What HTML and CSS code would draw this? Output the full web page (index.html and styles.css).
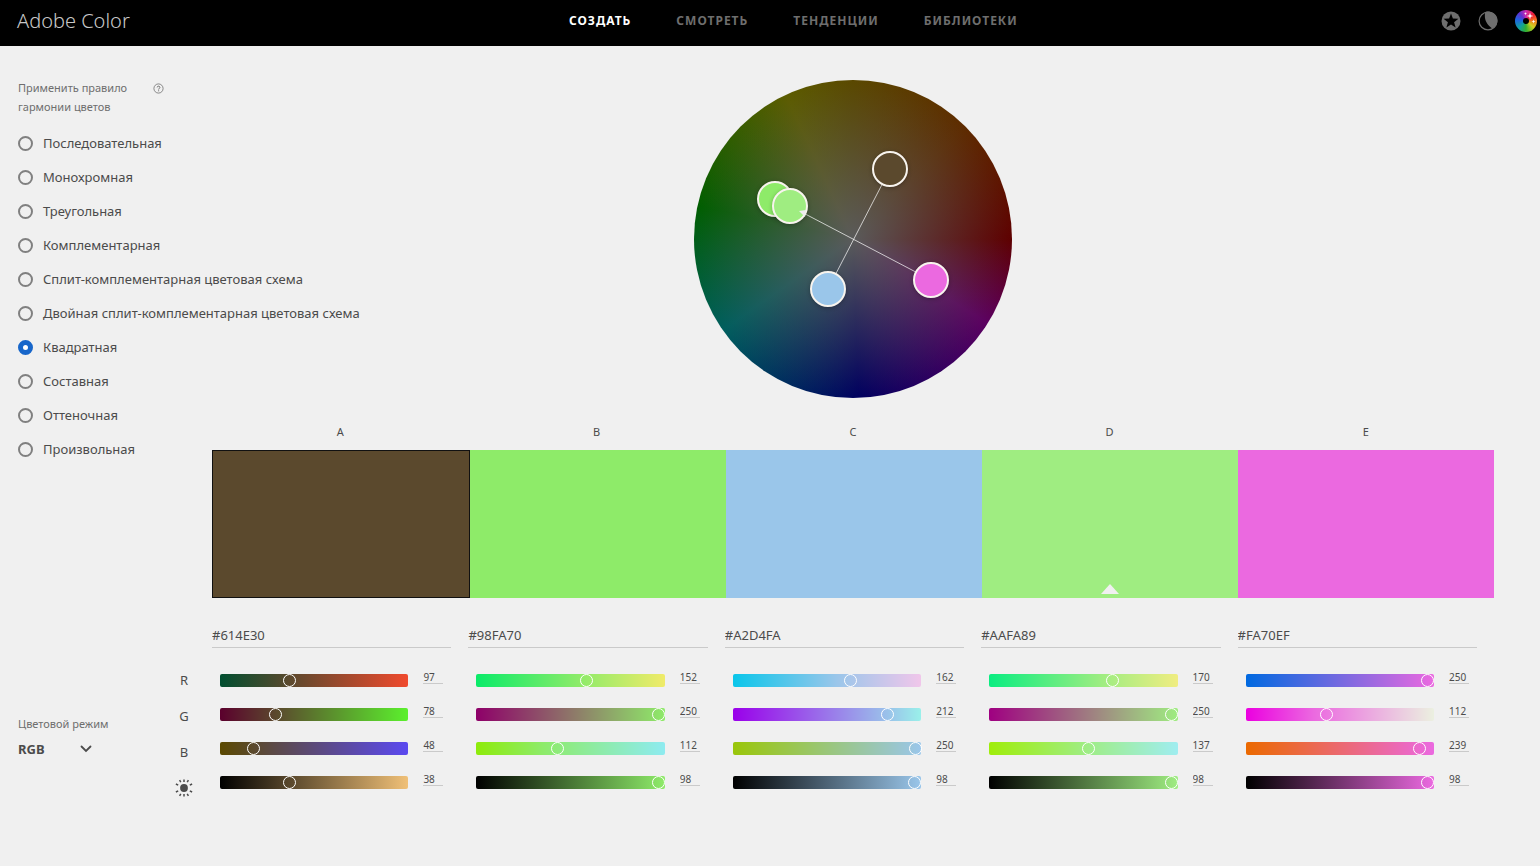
FILE: index.html
```html
<!DOCTYPE html>
<html lang="ru">
<head>
<meta charset="utf-8">
<meta name="viewport" content="width=device-width, initial-scale=1">
<title>Adobe Color</title>
<link rel="stylesheet" href="styles.css">
</head>
<body>
<header class="topbar">
  <a class="brand" href="#">Adobe Color</a>
  <nav class="nav">
    <a class="nav-link current" href="#">СОЗДАТЬ</a>
    <a class="nav-link" href="#">СМОТРЕТЬ</a>
    <a class="nav-link" href="#">ТЕНДЕНЦИИ</a>
    <a class="nav-link" href="#">БИБЛИОТЕКИ</a>
  </nav>
  <div class="tools">
    <button class="tool" aria-label="Избранное"><svg width="20" height="20" viewBox="0 0 20 20"><circle cx="10" cy="10" r="9.5" fill="#6e6e6e"/><path d="M10 2.400l1.900 5.200 5.500.2-4.300 3.400 1.500 5.300L10 13.400l-4.600 3.100 1.500-5.300-4.300-3.400 5.500-.2z" fill="#000"/></svg></button>
    <button class="tool" aria-label="Тема"><svg width="20" height="20" viewBox="0 0 20 20"><circle cx="10" cy="10" r="8.900" fill="none" stroke="#6e6e6e" stroke-width="1.200"/><path d="M7.300 1C5.900 6.500 7.500 13 14.600 17.700 22 13.500 20.800 3 13 1 11 .4 9 .4 7.300 1z" fill="#6e6e6e"/></svg></button>
    <button class="tool" aria-label="Профиль"><span class="avatar"><svg width="22" height="22" viewBox="0 0 22 22"><circle cx="11" cy="11" r="3" fill="#000"/><path d="M15 2.500l.8 2.700 2.700.8-2.700.8-.8 2.700-.8-2.700-2.700-.8 2.700-.8zM18.500 9.500l.5 1.500 1.500.5-1.500.5-.5 1.500-.5-1.500-1.500-.5 1.500-.5zM10.500 2l.4 1.200 1.200.4-1.200.4-.4 1.200-.4-1.200-1.200-.4 1.200-.4z" fill="#fff"/></svg></span></button>
  </div>
</header>

<main class="workspace">
  <section class="rules">
    <div class="rules-head">
      <h2 class="caption" id="rules-title">Применить правило гармонии цветов</h2>
      <button class="help" aria-label="Справка"><svg width="11" height="11" viewBox="0 0 11 11" fill="none" stroke="#6e6e6e"><circle cx="5.500" cy="5.500" r="4.600" stroke-width=".8"/><path d="M4.200 4.400c0-1.700 2.700-1.600 2.700 0 0 1-1.300 1-1.300 2.100M5.600 7.300v1"/></svg></button>
    </div>
    <div class="rule-list" role="radiogroup" aria-labelledby="rules-title">
      <label class="rule"><input type="radio" name="rule">Последовательная</label>
      <label class="rule"><input type="radio" name="rule">Монохромная</label>
      <label class="rule"><input type="radio" name="rule">Треугольная</label>
      <label class="rule"><input type="radio" name="rule">Комплементарная</label>
      <label class="rule"><input type="radio" name="rule">Сплит-комплементарная цветовая схема</label>
      <label class="rule"><input type="radio" name="rule">Двойная сплит-комплементарная цветовая схема</label>
      <label class="rule"><input type="radio" name="rule" checked>Квадратная</label>
      <label class="rule"><input type="radio" name="rule">Составная</label>
      <label class="rule"><input type="radio" name="rule">Оттеночная</label>
      <label class="rule"><input type="radio" name="rule">Произвольная</label>
    </div>
  </section>

  <section class="stage">
    <div class="wheel">
      <svg class="spokes" viewBox="0 0 318 318" stroke="#fff" stroke-opacity=".7"><path d="M196 89L134 209M96 126L237 200"/></svg>
      <button class="handle" aria-label="Цвет A" style="left:196px;top:89px;background:#5b492d"></button>
      <button class="handle" aria-label="Цвет B" style="left:81px;top:119px;background:#8eeb69"></button>
      <button class="handle" aria-label="Цвет C" style="left:134px;top:209px;background:#9ac6ea"></button>
      <button class="handle" aria-label="Цвет D" style="left:96px;top:126px;background:#9fed81"></button>
      <button class="handle" aria-label="Цвет E" style="left:237px;top:200px;background:#eb69e0"></button>
      <svg class="spokes" viewBox="0 0 318 318"><path d="M105 131l7-1-1 7z" fill="#eee"/></svg>
    </div>
    <div class="letters"><span>A</span><span>B</span><span>C</span><span>D</span><span>E</span></div>
    <div class="swatches">
      <button class="swatch selected" aria-label="A" style="background:#5b492d"></button>
      <button class="swatch" aria-label="B" style="background:#8eeb69"></button>
      <button class="swatch" aria-label="C" style="background:#9ac6ea"></button>
      <button class="swatch" aria-label="D" style="background:#9fed81"><svg width="18" height="10" viewBox="0 0 18 10"><path d="M9 0l9 10H0z" fill="#f0f0f0"/></svg></button>
      <button class="swatch" aria-label="E" style="background:#eb69e0"></button>
    </div>
  </section>

  <section class="mode">
    <label class="caption" for="mode">Цветовой режим</label>
    <div class="mode-box">
      <select id="mode"><option>RGB</option><option>CMYK</option><option>LAB</option></select>
      <svg class="chevron" width="12" height="8" viewBox="0 0 12 8"><path d="M1.500 1.500L6 6l4.500-4.500" fill="none" stroke="#4b4b4b" stroke-width="1.800" stroke-linecap="round"/></svg>
    </div>
  </section>

  <div class="channels">
    <span>R</span><span>G</span><span>B</span>
    <span><svg width="18" height="18" viewBox="0 0 18 18"><circle cx="9" cy="9" r="3.900" fill="#4b4b4b"/><path d="M9 .6v2.400M9 15v2.400M.9 5l2.300 1.200M14.800 11.800l2.300 1.200M.9 13l2.300-1.200M14.800 6.200L17.100 5M4.600 1.200l1.200 2M12.200 14.800l1.200 2M13.400 1.200l-1.200 2M5.800 14.800l-1.200 2" stroke="#4b4b4b" stroke-width="1.500"/></svg></span>
  </div>

  <section class="controls">
    <div class="color">
      <input class="hex" aria-label="HEX A" value="#614E30">
      <div class="row"><span class="track" style="background:linear-gradient(90deg,#004e30,#5b492d 37%,#f04a2d)"><input type="range" aria-label="A: R" max="255" value="97"></span><input class="num" aria-label="A: R" value="97"></div>
      <div class="row"><span class="track" style="background:linear-gradient(90deg,#5b002d,#5b492d 30%,#5bf02d)"><input type="range" aria-label="A: G" max="255" value="78"></span><input class="num" aria-label="A: G" value="78"></div>
      <div class="row"><span class="track" style="background:linear-gradient(90deg,#5b4900,#5b492d 18%,#5b49f0)"><input type="range" aria-label="A: B" max="255" value="48"></span><input class="num" aria-label="A: B" value="48"></div>
      <div class="row"><span class="track" style="background:linear-gradient(90deg,#000,#5b492d 38%,#f0c077)"><input type="range" aria-label="A: яркость" max="100" value="38"></span><input class="num" aria-label="A: яркость" value="38"></div>
    </div>
    <div class="color">
      <input class="hex" aria-label="HEX B" value="#98FA70">
      <div class="row"><span class="track" style="background:linear-gradient(90deg,#0aeb69,#8eeb69 55%,#f0eb69)"><input type="range" aria-label="B: R" max="255" value="152"></span><input class="num" aria-label="B: R" value="152"></div>
      <div class="row"><span class="track" style="background:linear-gradient(90deg,#8e0069,#8eeb69)"><input type="range" aria-label="B: G" max="255" value="250"></span><input class="num" aria-label="B: G" value="250"></div>
      <div class="row"><span class="track" style="background:linear-gradient(90deg,#8eeb0a,#8eeb69 35%,#8eebf0)"><input type="range" aria-label="B: B" max="255" value="112"></span><input class="num" aria-label="B: B" value="112"></div>
      <div class="row"><span class="track" style="background:linear-gradient(90deg,#000,#8eeb69)"><input type="range" aria-label="B: яркость" max="100" value="98"></span><input class="num" aria-label="B: яркость" value="98"></div>
    </div>
    <div class="color">
      <input class="hex" aria-label="HEX C" value="#A2D4FA">
      <div class="row"><span class="track" style="background:linear-gradient(90deg,#0ac6ea,#9ac6ea 55%,#f0c6ea)"><input type="range" aria-label="C: R" max="255" value="162"></span><input class="num" aria-label="C: R" value="162"></div>
      <div class="row"><span class="track" style="background:linear-gradient(90deg,#9a00ea,#9ac6ea 84%,#9af0ea)"><input type="range" aria-label="C: G" max="255" value="212"></span><input class="num" aria-label="C: G" value="212"></div>
      <div class="row"><span class="track" style="background:linear-gradient(90deg,#9ac60a,#9ac6ea)"><input type="range" aria-label="C: B" max="255" value="250"></span><input class="num" aria-label="C: B" value="250"></div>
      <div class="row"><span class="track" style="background:linear-gradient(90deg,#000,#9ac6ea)"><input type="range" aria-label="C: яркость" max="100" value="98"></span><input class="num" aria-label="C: яркость" value="98"></div>
    </div>
    <div class="color">
      <input class="hex" aria-label="HEX D" value="#AAFA89">
      <div class="row"><span class="track" style="background:linear-gradient(90deg,#0aed81,#9fed81 60%,#f0ed81)"><input type="range" aria-label="D: R" max="255" value="170"></span><input class="num" aria-label="D: R" value="170"></div>
      <div class="row"><span class="track" style="background:linear-gradient(90deg,#9f0081,#9fed81)"><input type="range" aria-label="D: G" max="255" value="250"></span><input class="num" aria-label="D: G" value="250"></div>
      <div class="row"><span class="track" style="background:linear-gradient(90deg,#9fed0a,#9fed81 50%,#9fedf0)"><input type="range" aria-label="D: B" max="255" value="137"></span><input class="num" aria-label="D: B" value="137"></div>
      <div class="row"><span class="track" style="background:linear-gradient(90deg,#000,#9fed81)"><input type="range" aria-label="D: яркость" max="100" value="98"></span><input class="num" aria-label="D: яркость" value="98"></div>
    </div>
    <div class="color">
      <input class="hex" aria-label="HEX E" value="#FA70EF">
      <div class="row"><span class="track" style="background:linear-gradient(90deg,#0069e0,#eb69e0)"><input type="range" aria-label="E: R" max="255" value="250"></span><input class="num" aria-label="E: R" value="250"></div>
      <div class="row"><span class="track" style="background:linear-gradient(90deg,#eb00e0,#eb69e0 36%,#ebf0e0)"><input type="range" aria-label="E: G" max="255" value="112"></span><input class="num" aria-label="E: G" value="112"></div>
      <div class="row"><span class="track" style="background:linear-gradient(90deg,#eb6900,#eb69e0)"><input type="range" aria-label="E: B" max="255" value="239"></span><input class="num" aria-label="E: B" value="239"></div>
      <div class="row"><span class="track" style="background:linear-gradient(90deg,#000,#eb69e0)"><input type="range" aria-label="E: яркость" max="100" value="98"></span><input class="num" aria-label="E: яркость" value="98"></div>
    </div>
  </section>
</main>
</body>
</html>
```
FILE: styles.css
```css
* { box-sizing: border-box; }

body {
  margin: 0;
  background: #f0f0f0;
  color: #4b4b4b;
  font: 13px/20px "Noto Sans", "Open Sans", sans-serif;
}

button {
  margin: 0;
  padding: 0;
  border: 0;
  background: none;
  display: block;
}

input, select { font: inherit; color: inherit; }

svg { display: block; }

.topbar {
  display: flex;
  align-items: center;
  justify-content: space-between;
  height: 46px;
  padding: 0 3px 4px 17px;
  background: #000;
}

.brand {
  color: #c8c8c8;
  font-size: 20px;
  font-weight: 300;
  text-decoration: none;
}

.nav { display: flex; gap: 45px; margin-left: 16px; }

.nav-link {
  color: #6e6e6e;
  font-size: 12px;
  font-weight: 700;
  letter-spacing: 1px;
  text-decoration: none;
}

.nav-link.current { color: #fff; }

.tools { display: flex; align-items: center; gap: 17px; }

.avatar {
  display: block;
  border-radius: 50%;
  background: conic-gradient(#d02bb0, #f02030 50deg, #f08020 90deg, #d0d020 130deg, #30b030 180deg, #10a0a0 225deg, #2060e0 280deg, #6030d0 320deg, #d02bb0);
}

.workspace {
  display: grid;
  grid-template-columns: 168px 44px 1fr;
  padding-right: 46px;
}

.rules { grid-column: 1 / 3; padding: 32px 0 0 18px; }

.rules-head { display: flex; align-items: flex-start; }

.caption {
  margin: 0;
  color: #6e6e6e;
  font-size: 11px;
  font-weight: 400;
  line-height: 19px;
}

h2.caption { width: 135px; padding-right: 20px; }

.help { padding-top: 5px; }

.rule-list { padding-top: 10px; }

.rule {
  display: flex;
  align-items: center;
  gap: 10px;
  height: 34px;
  white-space: nowrap;
}

.rule input {
  appearance: none;
  flex: none;
  width: 15px;
  height: 15px;
  margin: 0;
  border: 2px solid #808080;
  border-radius: 50%;
}

.rule input:checked { border: 5px solid #1766ca; background: #fff; }

.stage { padding-top: 34px; }

.wheel {
  position: relative;
  width: 318px;
  height: 318px;
  margin: 0 auto;
  border-radius: 50%;
  background:
    radial-gradient(closest-side, #5a5a5a, #5a5a5a00),
    conic-gradient(#5a4800, #5e2b00 45deg, #5e0000 90deg, #5c0060 122deg, #00005f 178deg, #005e5e 235deg, #005e00 282deg, #5c5c00 335deg, #5a4800);
}

.spokes { position: absolute; inset: 0; pointer-events: none; }

.handle {
  position: absolute;
  width: 36px;
  height: 36px;
  border: 2px solid #f8f4ee;
  border-radius: 50%;
  transform: translate(-50%, -50%);
  box-shadow: 0 1px 4px #0004;
}

.letters {
  display: grid;
  grid-template-columns: repeat(5, 1fr);
  padding: 24px 0 8px;
  font-size: 11px;
  text-align: center;
}

.swatches {
  display: grid;
  grid-template-columns: 258px repeat(4, 1fr);
  grid-template-columns: calc(20% + 2px) repeat(4, 1fr);
}

.swatch {
  display: flex;
  align-items: flex-end;
  justify-content: center;
  height: 148px;
  padding-bottom: 4px;
}

.swatch.selected { border: 1px solid #111; }

.mode { padding: 116px 0 0 18px; }

.mode .caption { display: block; }

.mode-box { display: flex; align-items: center; padding-top: 6px; }

.mode select {
  appearance: none;
  width: 62px;
  border: 0;
  padding: 0;
  background: none;
  font-weight: 700;
}

.channels {
  display: flex;
  flex-direction: column;
  padding-top: 64px;
}

.channels span {
  display: flex;
  align-items: center;
  justify-content: center;
  width: 32px;
  height: 36px;
}

.controls {
  display: grid;
  grid-template-columns: repeat(5, 1fr);
  padding-top: 25px;
}

.hex {
  display: block;
  width: calc(100% - 17px);
  height: 25px;
  margin-bottom: 15px;
  padding: 0 0 1px;
  border: 0;
  border-bottom: 1px solid #cacaca;
  background: none;
}

.row {
  display: flex;
  align-items: center;
  gap: 15px;
  height: 34px;
  padding: 0 25px 0 8px;
}

.track { flex: 1; height: 13px; border-radius: 2px; }

.track input {
  appearance: none;
  display: block;
  width: calc(100% + 12px);
  height: 13px;
  margin: 0 -4px 0 -8px;
  background: none;
}

.track input::-webkit-slider-thumb {
  appearance: none;
  width: 13px;
  height: 13px;
  border: 1px solid #fff;
  border-radius: 50%;
}

.num {
  width: 20px;
  height: 14px;
  margin-bottom: 6px;
  padding: 0;
  border: 0;
  border-bottom: 1px solid #cacaca;
  background: none;
  font-size: 10px;
  line-height: 12px;
}
```
